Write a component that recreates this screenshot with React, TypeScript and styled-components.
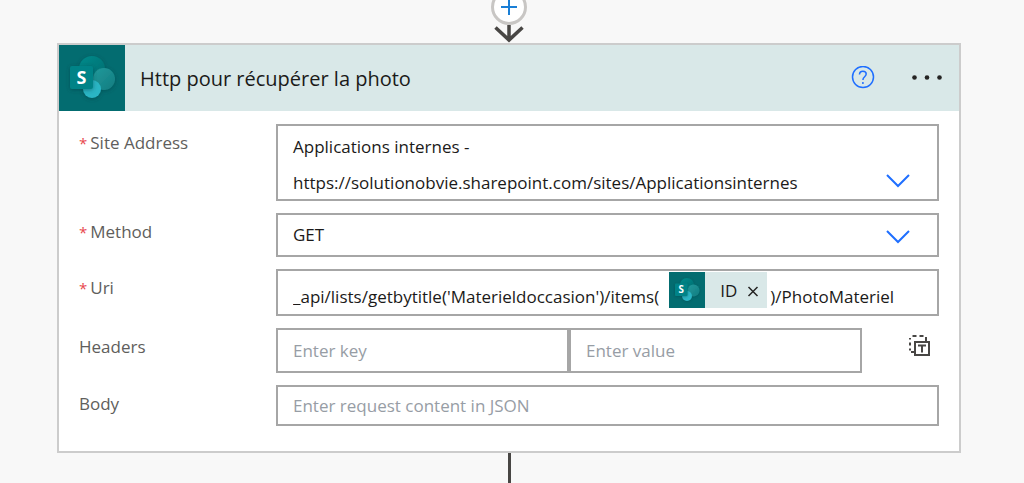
import React, { useState } from "react";
import styled, { createGlobalStyle } from "styled-components";

const GlobalStyle = createGlobalStyle`
  *, *::before, *::after { box-sizing: border-box; }
  body {
    margin: 0;
    background: #f8f8f8;
    color: #1b1a19;
    font-family: "Segoe UI", "Open Sans", "Noto Sans", sans-serif;
    font-size: 17px;
    line-height: 24px;
  }
  button, input, select { font: inherit; color: inherit; margin: 0; }
`;

const Flow = styled.main`
  display: flex;
  flex-direction: column;
  align-items: center;
  min-height: 100vh;
  padding: 0 63px 0 57px;
  overflow: hidden;
`;

const InsertButton = styled.button`
  display: grid;
  place-items: center;
  flex: none;
  width: 36px;
  height: 36px;
  margin-top: -11px;
  padding: 0;
  border: 3px solid #c8c6c4;
  border-radius: 50%;
  background: #fff;
  cursor: pointer;
`;

const Arrow = styled.svg`
  display: block;
  flex: none;
`;

const Line = styled.div`
  flex: 1;
  width: 3px;
  min-height: 30px;
  background: #484644;
`;

const Card = styled.section`
  width: 100%;
  border: 2px solid #cccccc;
  background: #fff;
`;

const CardHeader = styled.header`
  display: flex;
  align-items: center;
  height: 66px;
  padding-right: 16px;
  background: #d9e8e8;
`;

const Title = styled.h1`
  flex: 1;
  margin: 0;
  padding: 2px 0 0 15px;
  font-size: 20px;
  line-height: 28px;
  font-weight: 400;
`;

const IconButton = styled.button`
  display: grid;
  place-items: center;
  padding: 0;
  border: 0;
  background: transparent;
  cursor: pointer;
`;

const HeaderActions = styled.div`
  display: flex;
  align-items: center;
  gap: 36px;
`;

const Fields = styled.form`
  display: grid;
  gap: 12px;
  padding: 13px 20px 25px 19px;
`;

const Row = styled.div`
  display: grid;
  grid-template-columns: 198px minmax(0, 1fr);
`;

const Label = styled.label`
  display: flex;
  gap: 3px;
  padding: 7px 0 0 1px;
  color: #605e5c;
`;

const Required = styled.span`
  color: #e8474c;
  font-size: 15px;
`;

const Box = styled.div<{ $height: number }>`
  position: relative;
  display: flex;
  align-items: flex-start;
  height: ${(p) => p.$height}px;
  border: 2px solid #a6a6a6;
  background: #fff;
`;

const PickedValue = styled.div`
  flex: 1;
  padding: 3px 60px 0 15px;
  line-height: 36px;
`;

const NativeSelect = styled.select<{ $overlay?: boolean }>`
  appearance: none;
  border: 0;
  outline: 0;
  background: transparent;
  cursor: pointer;
  ${(p) =>
    p.$overlay
      ? "position: absolute; inset: 0; width: 100%; height: 100%; opacity: 0;"
      : "flex: 1; align-self: stretch; padding: 0 60px 0 15px;"}
`;

const Chevron = styled.svg`
  position: absolute;
  right: 26px;
  bottom: 10px;
  pointer-events: none;
`;

const TextInput = styled.input<{ $height: number }>`
  width: 100%;
  height: ${(p) => p.$height}px;
  padding: 0 15px;
  border: 2px solid #a6a6a6;
  border-radius: 0;
  background: #fff;
  outline: 0;
  &::placeholder { color: #979da5; opacity: 1; }
`;

const TokenEditor = styled.div`
  display: flex;
  align-items: flex-start;
  height: 47px;
  padding: 1px 15px 0;
  border: 2px solid #a6a6a6;
  background: #fff;
`;

const Segment = styled.input`
  field-sizing: content;
  margin-top: 13px;
  padding: 0;
  border: 0;
  outline: 0;
  background: transparent;
`;

const Token = styled.span`
  display: flex;
  align-items: center;
  height: 36px;
  margin: 0 3px 0 10px;
  background: #d9e8e8;
`;

const TokenName = styled.span`
  padding: 2px 9px 0 15px;
`;

const KeyValue = styled.div`
  display: grid;
  grid-template-columns: minmax(0, 1fr) minmax(0, 1fr) 77px;
`;

const ModeButton = styled(IconButton)`
  place-self: start end;
  margin: 6px 7px 0 0;
`;

function SharePointIcon({ size }: { size: number }) {
  return (
    <svg width={size} height={size} viewBox="0 0 66 66" aria-hidden="true">
      <defs>
        <filter id={"soft" + size} x="-30%" y="-30%" width="160%" height="160%">
          <feDropShadow dx="0" dy="1" stdDeviation="2" floodColor="#003c40" floodOpacity="0.5" />
        </filter>
        <linearGradient id={"top" + size} x1="0" y1="0" x2="1" y2="1">
          <stop offset="0" stopColor="#058c8c" />
          <stop offset="1" stopColor="#066a6e" />
        </linearGradient>
        <linearGradient id={"side" + size} x1="0" y1="0" x2="1" y2="1">
          <stop offset="0" stopColor="#239a9c" />
          <stop offset="1" stopColor="#117c80" />
        </linearGradient>
      </defs>
      <rect width="66" height="66" fill="#036c70" />
      <g filter={`url(#soft${size})`}>
        <circle cx="33" cy="24" r="13" fill={`url(#top${size})`} />
        <circle cx="45" cy="34" r="11" fill={`url(#side${size})`} />
        <circle cx="33" cy="44" r="9" fill="#2bb5c4" />
      </g>
      <rect x="11" y="21" width="23" height="23" rx="2" fill="#038387" filter={`url(#soft${size})`} />
      <text x="22.500" y="39" textAnchor="middle" fontFamily="Open Sans, sans-serif" fontWeight="700" fontSize="18" fill="#fff">S</text>
    </svg>
  );
}

function ChevronIcon() {
  return (
    <Chevron width="26" height="16" viewBox="0 0 26 16" fill="none" stroke="#1f6fff" strokeWidth="2" aria-hidden="true">
      <path d="M2 2 13 13 24 2" />
    </Chevron>
  );
}

export default function App() {
  const site = "Applications internes - https://solutionobvie.sharepoint.com/sites/Applicationsinternes";
  const [prefix, setPrefix] = useState("_api/lists/getbytitle('Materieldoccasion')/items(");
  const [suffix, setSuffix] = useState(")/PhotoMateriel");
  const [hasToken, setHasToken] = useState(true);

  return (
    <>
      <GlobalStyle />
      <Flow>
        <InsertButton type="button" aria-label="Insert a new step">
          <svg width="18" height="18" viewBox="0 0 18 18" stroke="#1a7fd6" strokeWidth="2" aria-hidden="true">
            <path d="M9 1v16M1 9h16" />
          </svg>
        </InsertButton>
        <Arrow width="32" height="18" viewBox="0 0 32 18" fill="none" stroke="#484644" strokeWidth="3.500" aria-hidden="true">
          <path d="M16 0v15M2.500 2.500 16 15 29.500 2.500" />
        </Arrow>
        <Card>
          <CardHeader>
            <SharePointIcon size={66} />
            <Title>Http pour récupérer la photo</Title>
            <HeaderActions>
              <IconButton type="button" aria-label="Help">
                <svg width="24" height="24" viewBox="0 0 24 24" fill="none" stroke="#1f6fff" strokeWidth="1.500" aria-hidden="true">
                  <circle cx="12" cy="11" r="10.500" />
                  <path d="M8.500 8.500c0-2 1.400-3.300 3.400-3.300s3.300 1.200 3.300 2.900c0 2.600-3.300 2.800-3.300 5.900" />
                  <path d="M11.900 16v2" />
                </svg>
              </IconButton>
              <IconButton type="button" aria-label="More commands">
                <svg width="32" height="24" viewBox="0 0 32 24" fill="#252423" aria-hidden="true">
                  <circle cx="3.500" cy="11.500" r="2.300" />
                  <circle cx="16" cy="11.500" r="2.300" />
                  <circle cx="28.500" cy="11.500" r="2.300" />
                </svg>
              </IconButton>
            </HeaderActions>
          </CardHeader>
          <Fields>
            <Row>
              <Label htmlFor="site"><Required>*</Required>Site Address</Label>
              <Box $height={77}>
                <PickedValue aria-hidden="true">
                  Applications internes -<br />
                  https://solutionobvie.sharepoint.com/sites/Applicationsinternes
                </PickedValue>
                <NativeSelect id="site" $overlay defaultValue={site}>
                  <option>{site}</option>
                </NativeSelect>
                <ChevronIcon />
              </Box>
            </Row>
            <Row>
              <Label htmlFor="method"><Required>*</Required>Method</Label>
              <Box $height={44}>
                <NativeSelect id="method" defaultValue="GET">
                  <option>GET</option>
                  <option>POST</option>
                  <option>PUT</option>
                  <option>PATCH</option>
                  <option>DELETE</option>
                </NativeSelect>
                <ChevronIcon />
              </Box>
            </Row>
            <Row>
              <Label htmlFor="uri"><Required>*</Required>Uri</Label>
              <TokenEditor>
                <Segment id="uri" value={prefix} onChange={(e) => setPrefix(e.target.value)} />
                {hasToken && (
                  <Token>
                    <SharePointIcon size={36} />
                    <TokenName>ID</TokenName>
                    <IconButton type="button" aria-label="Remove ID" onClick={() => setHasToken(false)}>
                      <svg width="21" height="24" viewBox="0 0 21 24" stroke="#252423" strokeWidth="1.500" aria-hidden="true">
                        <path d="M2.500 9l9 9M11.500 9l-9 9" />
                      </svg>
                    </IconButton>
                  </Token>
                )}
                <Segment aria-label="Uri, after ID" value={suffix} onChange={(e) => setSuffix(e.target.value)} />
              </TokenEditor>
            </Row>
            <Row>
              <Label htmlFor="header-key">Headers</Label>
              <KeyValue>
                <TextInput id="header-key" $height={45} placeholder="Enter key" />
                <TextInput aria-label="Header value" $height={45} placeholder="Enter value" />
                <ModeButton type="button" aria-label="Switch to text mode">
                  <svg width="24" height="24" viewBox="0 0 24 24" fill="none" stroke="#484644" strokeWidth="2" aria-hidden="true">
                    <path d="M7 8h14v13H7z" />
                    <path d="M10 11.500h8M14 11.500v7" />
                    <path d="M2 5.500V4M4.500 2h4M11.500 2h4M18 3v5M2 8.500v3M2 14.500v2M3 18h4" />
                  </svg>
                </ModeButton>
              </KeyValue>
            </Row>
            <Row>
              <Label htmlFor="body">Body</Label>
              <TextInput id="body" $height={41} placeholder="Enter request content in JSON" />
            </Row>
          </Fields>
        </Card>
        <Line />
      </Flow>
    </>
  );
}
